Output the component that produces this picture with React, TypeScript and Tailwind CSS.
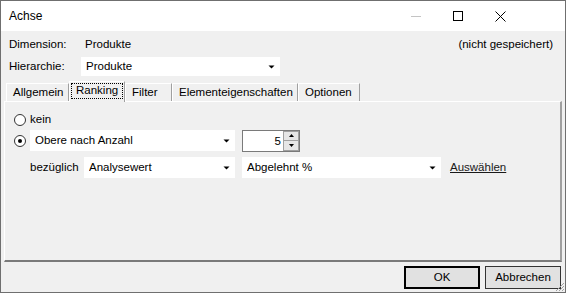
import React from "react";

const font = { fontFamily: '"Liberation Sans", Arial, sans-serif' };

function Arrow() {
  return (
    <svg width="7" height="4" viewBox="0 0 7 4" className="shrink-0">
      <path d="M0.5 0.5 L6.5 0.5 L3.5 3.5 Z" fill="#000" />
    </svg>
  );
}

function Select({ value, className }: { value: string; className: string }) {
  return (
    <div className={`flex items-center bg-white pl-[5px] pr-[5px] ${className}`}>
      <span className="flex-1 truncate">{value}</span>
      <Arrow />
    </div>
  );
}

function Radio({ checked }: { checked?: boolean }) {
  return (
    <div className="w-[12px] h-[12px] rounded-full border border-[#333] bg-white flex items-center justify-center shrink-0">
      {checked && <div className="w-[4px] h-[4px] rounded-full bg-black" />}
    </div>
  );
}

function Tab({ label, width, active }: { label: string; width: string; active?: boolean }) {
  if (active) {
    return (
      <div className={`${width} h-[21px] -mb-px relative z-10 bg-[#f0f0f0] border-l border-t border-r border-l-white border-t-white border-r-[#a0a0a0] p-[1px] pb-[3px]`}>
        <div className="h-full border border-dotted border-black flex items-center pl-[4px]">{label}</div>
      </div>
    );
  }
  return (
    <div className={`${width} h-[18px] flex items-center pl-[6px] bg-[#f0f0f0] border-l border-t border-r border-l-white border-t-white border-r-[#a0a0a0]`}>
      <span>{label}</span>
    </div>
  );
}

export default function App() {
  return (
    <div
      className="w-[566px] h-[293px] border border-[#6f6f6f] bg-[#f0f0f0] flex flex-col text-[11.5px] text-black relative overflow-hidden"
      style={font}
    >
      {/* title bar */}
      <div className="h-[30px] bg-white flex items-center shrink-0 text-[12px]">
        <span className="pl-[8px] flex-1">Achse</span>
        <div className="flex pr-[44px]">
          <div className="w-[42px] flex items-center justify-center">
            <div className="w-[10px] h-px bg-[#c4c4c4]" />
          </div>
          <div className="w-[42px] flex items-center justify-center">
            <div className="w-[10px] h-[10px] border border-black" />
          </div>
          <div className="w-[42px] flex items-center justify-center">
            <svg width="11" height="11" viewBox="0 0 11 11">
              <path d="M0.5 0.5 L10.5 10.5 M10.5 0.5 L0.5 10.5" stroke="#000" strokeWidth="1" />
            </svg>
          </div>
        </div>
      </div>

      {/* body */}
      <div className="flex-1 flex flex-col px-[3px]">
        <div className="h-[15px] mt-[6px] flex items-center pl-[5px] pr-[9px]">
          <span className="w-[76px]">Dimension:</span>
          <span className="flex-1">Produkte</span>
          <span>(nicht gespeichert)</span>
        </div>
        <div className="h-[19px] mt-[5px] flex items-center pl-[5px]">
          <span className="w-[72px]">Hierarchie:</span>
          <Select value="Produkte" className="w-[199px] h-[19px]" />
        </div>

        {/* tabs */}
        <div className="flex items-end h-[21px] mt-[4px] pl-[2px]">
          <Tab label="Allgemein" width="w-[63px]" />
          <Tab label="Ranking" width="w-[56px]" active />
          <Tab label="Filter" width="w-[47px]" />
          <Tab label="Elementeigenschaften" width="w-[126px]" />
          <Tab label="Optionen" width="w-[62px]" />
        </div>

        {/* panel */}
        <div className="h-[161px] border-l border-t border-l-white border-t-white border-r-2 border-b-2 border-r-[#a0a0a0] border-b-[#7a7a7a] flex flex-col pl-[9px]">
          <div className="h-[13px] mt-[11px] flex items-center gap-[4px]">
            <Radio />
            <span>kein</span>
          </div>
          <div className="h-[21px] mt-[4px] flex items-center gap-[4px]">
            <Radio checked />
            <Select value="Obere nach Anzahl" className="w-[205px] h-[21px]" />
            <div className="ml-[3px] w-[58px] h-[22px] border border-[#7a7a7a] bg-white flex">
              <span className="flex-1 text-right pr-[2px] leading-[20px]">5</span>
              <div className="w-[16px] flex flex-col bg-[#f0f0f0]">
                <div className="flex-1 border border-[#a0a0a0] bg-[#e6e6e6] flex items-center justify-center">
                  <svg width="5" height="3" viewBox="0 0 5 3">
                    <path d="M0 3 L5 3 L2.5 0 Z" fill="#000" />
                  </svg>
                </div>
                <div className="flex-1 border border-[#a0a0a0] border-t-0 bg-[#e6e6e6] flex items-center justify-center">
                  <svg width="5" height="3" viewBox="0 0 5 3">
                    <path d="M0 0 L5 0 L2.5 3 Z" fill="#000" />
                  </svg>
                </div>
              </div>
            </div>
          </div>
          <div className="h-[21px] mt-[6px] flex items-center pl-[16px]">
            <span className="w-[54px]">bezüglich</span>
            <Select value="Analysewert" className="w-[151px] h-[21px]" />
            <Select value="Abgelehnt %" className="ml-[7px] w-[199px] h-[21px]" />
            <span className="ml-[9px] underline text-[#1a1a1a]">Auswählen</span>
          </div>
        </div>

        {/* buttons */}
        <div className="flex justify-end gap-[5px] pt-[4px] pr-[1px]">
          <button className="w-[76px] h-[23px] border-2 border-black bg-[#e1e1e1]">OK</button>
          <button className="w-[76px] h-[23px] border border-[#333] bg-[#e1e1e1]">Abbrechen</button>
        </div>
      </div>

      {/* resize grip */}
      <svg width="10" height="10" viewBox="0 0 10 10" className="absolute right-0 bottom-0">
        <path d="M9 1 L1 9 M9 4 L4 9 M9 7 L7 9" stroke="#a0a0a0" strokeWidth="1" />
      </svg>
    </div>
  );
}
